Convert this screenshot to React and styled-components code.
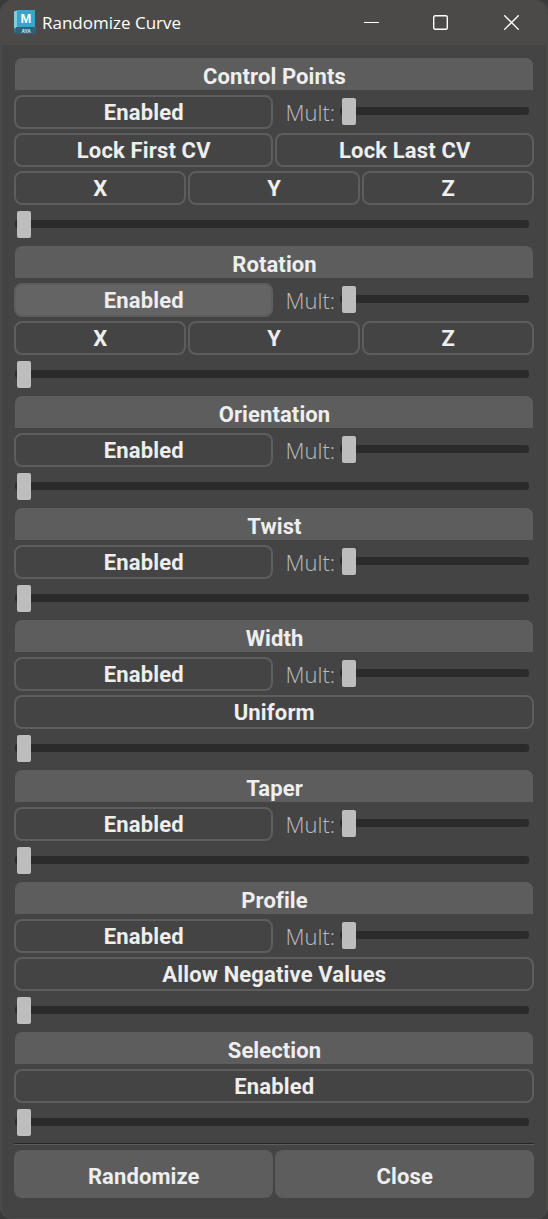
import React from "react";
import styled, { createGlobalStyle } from "styled-components";

const GlobalStyle = createGlobalStyle`
  *, *::before, *::after { box-sizing: border-box; }
  html, body { margin: 0; padding: 0; background: #3a3a3a; }
  button { font: inherit; color: inherit; margin: 0; padding: 0; }
`;

const Window = styled.main`
  width: 548px;
  height: 1219px;
  display: flex;
  flex-direction: column;
  overflow: hidden;
  background: #444444;
  border-left: 2px solid #4a4a4a;
  border-right: 2px solid #4a4a48;
  border-bottom: 1px solid #4a4a4a;
  border-radius: 12px;
  color: #eeeeee;
  font-family: Roboto, "Liberation Sans", sans-serif;
  font-size: 22px;
  font-weight: 700;
`;

const TitleBar = styled.header`
  flex: none;
  height: 45px;
  margin: 0 -2px;
  padding-left: 13px;
  display: flex;
  align-items: center;
  background: #4c4a48;
`;

const AppIcon = styled.svg`
  flex: none;
  margin-bottom: 1px;
`;

const Title = styled.h1`
  flex: 1;
  margin: 0 0 0 6px;
  font: 400 17px/24px "Open Sans", "Noto Sans", sans-serif;
  color: #ffffff;
`;

const WindowControls = styled.div`
  display: flex;
  height: 45px;
`;

const ControlButton = styled.button`
  width: ${(p) => (p.$last ? "73px" : "69px")};
  display: flex;
  align-items: center;
  justify-content: center;
  border: 0;
  background: transparent;
`;

const Content = styled.div`
  flex: 1;
  display: flex;
  flex-direction: column;
  padding: 13px 12px 0;
`;

const Section = styled.section`
  display: flex;
  flex-direction: column;
`;

const SectionTitle = styled.h2`
  height: 32px;
  margin: 0 1px 5px;
  padding-left: 1px;
  border-radius: 7px 7px 0 0;
  background: #5d5d5d;
  font: inherit;
  line-height: 37px;
  text-align: center;
  letter-spacing: 0.1px;
`;

const Row = styled.div`
  display: grid;
  grid-template-columns: repeat(${(p) => p.$columns}, 1fr);
  grid-template-rows: 34px;
  column-gap: 2px;
  margin-bottom: 4px;
`;

const ToggleButton = styled.button`
  padding: 2px 0 0 0.5px;
  border: 2px solid #5d5d5d;
  border-radius: 8px;
  background: ${(p) => (p.$hovered ? "#646464" : "transparent")};
  line-height: 28px;
  text-align: center;
  letter-spacing: 0.15px;
`;

const Multiplier = styled.label`
  display: flex;
  padding: 0 5px 0 10.5px;
`;

const MultiplierLabel = styled.span`
  width: 54.5px;
  font: 350 22px/34px "Open Sans", "Noto Sans", sans-serif;
  white-space: nowrap;
  color: #bbbbbb;
`;

const SliderArea = styled.div`
  flex: ${(p) => (p.$compact ? "1" : "none")};
  height: ${(p) => (p.$compact ? "34px" : "37px")};
  padding: ${(p) => (p.$compact ? "12px 0 0" : "11px 5px 0 1px")};
`;

const SliderTrack = styled.div`
  height: 8px;
  border-radius: 3px;
  background: #2b2b2b;
`;

const SliderHandle = styled.div`
  position: relative;
  top: -9px;
  left: 2px;
  width: 14px;
  height: 27px;
  border-radius: 2px;
  background: #bdbdbd;
`;

const Separator = styled.hr`
  width: 100%;
  height: 2px;
  margin: -1px 0 5px;
  border: 0;
  border-top: 1px solid #272727;
  background: #5d5d5d;
`;

const Actions = styled.footer`
  display: grid;
  grid-template-columns: 1fr 1fr;
  column-gap: 2px;
`;

const ActionButton = styled.button`
  height: 48px;
  padding: 4px 0 0 0.5px;
  border: 0;
  border-radius: 8px;
  background: #5d5d5d;
  letter-spacing: 0.1px;
`;

const sections = [
  { title: "Control Points", rows: [["Lock First CV", "Lock Last CV"], ["X", "Y", "Z"]] },
  { title: "Rotation", hovered: true, rows: [["X", "Y", "Z"]] },
  { title: "Orientation", rows: [] },
  { title: "Twist", rows: [] },
  { title: "Width", rows: [["Uniform"]] },
  { title: "Taper", rows: [] },
  { title: "Profile", rows: [["Allow Negative Values"]] },
  { title: "Selection", rows: [], single: true },
];

function MayaIcon() {
  return (
    <AppIcon width="23" height="24" viewBox="0 0 23 24">
      <path d="M1 1.5 5 0v18l-4 1.5z" fill="#83cbdf" />
      <path d="M1 18.5 4 17v7l-3-2z" fill="#2b7696" />
      <path d="M4 0h18v18H4z" fill="#37a5cc" />
      <path d="M3 17h20v7H3z" fill="#315f79" />
      <text x="13" y="13" textAnchor="middle" fontFamily="Liberation Sans, sans-serif" fontSize="13" fontWeight="700" fill="#fff">M</text>
      <text x="13" y="22.5" textAnchor="middle" fontFamily="Liberation Sans, sans-serif" fontSize="4.8" fontWeight="700" fill="#e3edf1">AYA</text>
    </AppIcon>
  );
}

function Slider({ compact }) {
  return (
    <SliderArea $compact={compact}>
      <SliderTrack>
        <SliderHandle />
      </SliderTrack>
    </SliderArea>
  );
}

function ParameterSection({ title, rows, hovered, single }) {
  return (
    <Section>
      <SectionTitle>{title}</SectionTitle>
      <Row $columns={single ? 1 : 2}>
        <ToggleButton $hovered={hovered}>Enabled</ToggleButton>
        {!single && (
          <Multiplier>
            <MultiplierLabel>Mult:</MultiplierLabel>
            <Slider compact />
          </Multiplier>
        )}
      </Row>
      {rows.map((row) => (
        <Row key={row.join("-")} $columns={row.length}>
          {row.map((label) => (
            <ToggleButton key={label}>{label}</ToggleButton>
          ))}
        </Row>
      ))}
      <Slider />
    </Section>
  );
}

export default function App() {
  return (
    <>
      <GlobalStyle />
      <Window>
        <TitleBar>
          <MayaIcon />
          <Title>Randomize Curve</Title>
          <WindowControls>
            <ControlButton aria-label="Minimize">
              <svg width="15" height="15" viewBox="0 0 15 15">
                <path d="M0 7.5h15" stroke="#fff" fill="none" />
              </svg>
            </ControlButton>
            <ControlButton aria-label="Maximize">
              <svg width="15" height="15" viewBox="0 0 15 15">
                <rect x=".7" y=".7" width="13.6" height="13.6" rx="1.5" stroke="#fff" strokeWidth="1.4" fill="none" />
              </svg>
            </ControlButton>
            <ControlButton $last aria-label="Close window">
              <svg width="15" height="15" viewBox="0 0 15 15">
                <path d="M.3.3l14.4 14.4M14.7.3L.3 14.7" stroke="#fff" strokeWidth="1.3" fill="none" />
              </svg>
            </ControlButton>
          </WindowControls>
        </TitleBar>
        <Content>
          {sections.map((section) => (
            <ParameterSection key={section.title} {...section} />
          ))}
          <Separator />
          <Actions>
            <ActionButton>Randomize</ActionButton>
            <ActionButton>Close</ActionButton>
          </Actions>
        </Content>
      </Window>
    </>
  );
}
